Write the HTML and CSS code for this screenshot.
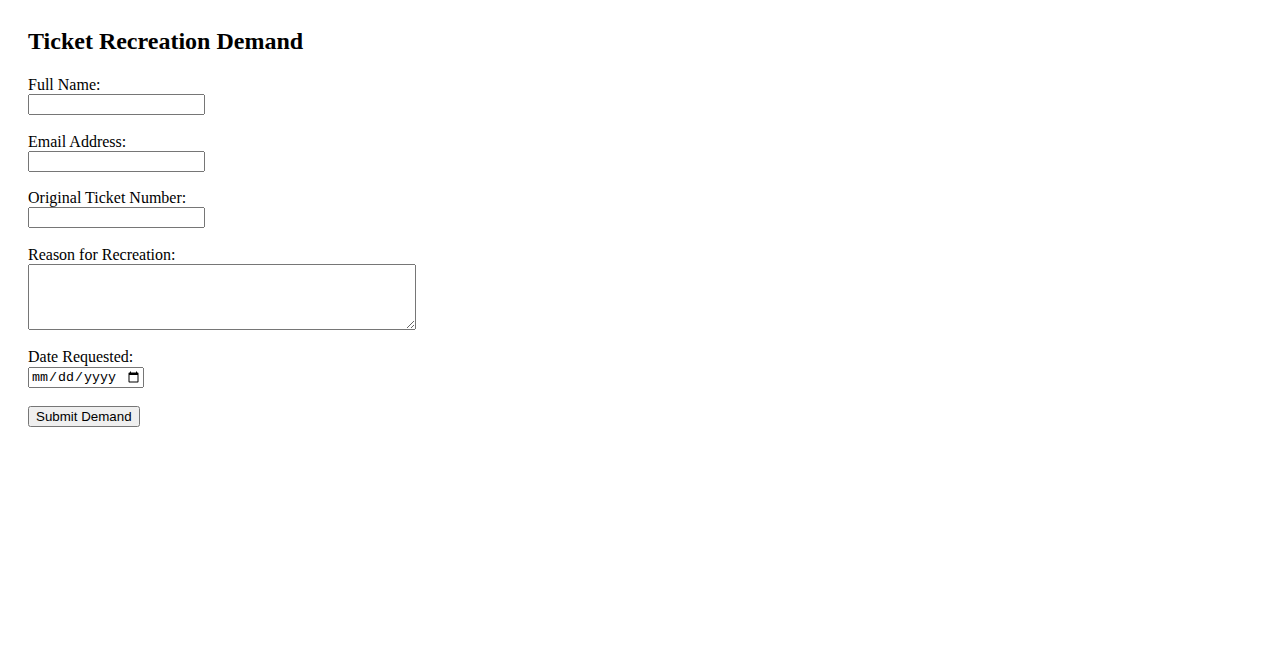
FILE: index.html
```html
<!DOCTYPE html>
<html lang="en">
<head>
    <meta charset="UTF-8">
    <meta name="viewport" content="width=device-width, initial-scale=1.0">
    <title>Ticket Recreation Demand</title>
    <link rel="stylesheet" href="styles.css">
</head>
<body>
    <div class="container">
        <h2>Ticket Recreation Demand</h2>
        <form id="demandForm">
            <div class="field">
                <label for="fullName">Full Name:</label>
                <input type="text" id="fullName" name="fullName">
            </div>
            <div class="field">
                <label for="email">Email Address:</label>
                <input type="email" id="email" name="email">
            </div>
            <div class="field">
                <label for="ticketNumber">Original Ticket Number:</label>
                <input type="text" id="ticketNumber" name="ticketNumber">
            </div>
            <div class="field field-text">
                <label for="reason">Reason for Recreation:</label>
                <textarea id="reason" name="reason"></textarea>
            </div>
            <div class="field">
                <label for="dateRequested">Date Requested:</label>
                <input type="date" id="dateRequested" name="dateRequested">
            </div>
            <button type="submit">Submit Demand</button>
        </form>
    </div>
</body>
</html>
```

FILE: styles.css
```css
body {
    font-family: 'Liberation Serif', 'Times New Roman', serif;
    margin: 0;
}

.container {
    padding: 28px;
}

h2 {
    font-size: 24px;
    margin: 0 0 21px 0;
}

.field {
    margin-bottom: 17.6px;
}

.field-text {
    margin-bottom: 18.6px;
}

label {
    display: block;
    font-size: 16px;
}

input {
    width: 177px;
    height: 21px;
    box-sizing: border-box;
    font-family: 'Liberation Sans', Arial, sans-serif;
}

input[type="date"] {
    width: 116px;
    margin-top: 1px;
    font-family: 'Liberation Mono', monospace;
}

textarea {
    display: block;
    width: 388px;
    height: 66px;
    box-sizing: border-box;
}

button {
    font-family: 'Liberation Sans', Arial, sans-serif;
}
```
